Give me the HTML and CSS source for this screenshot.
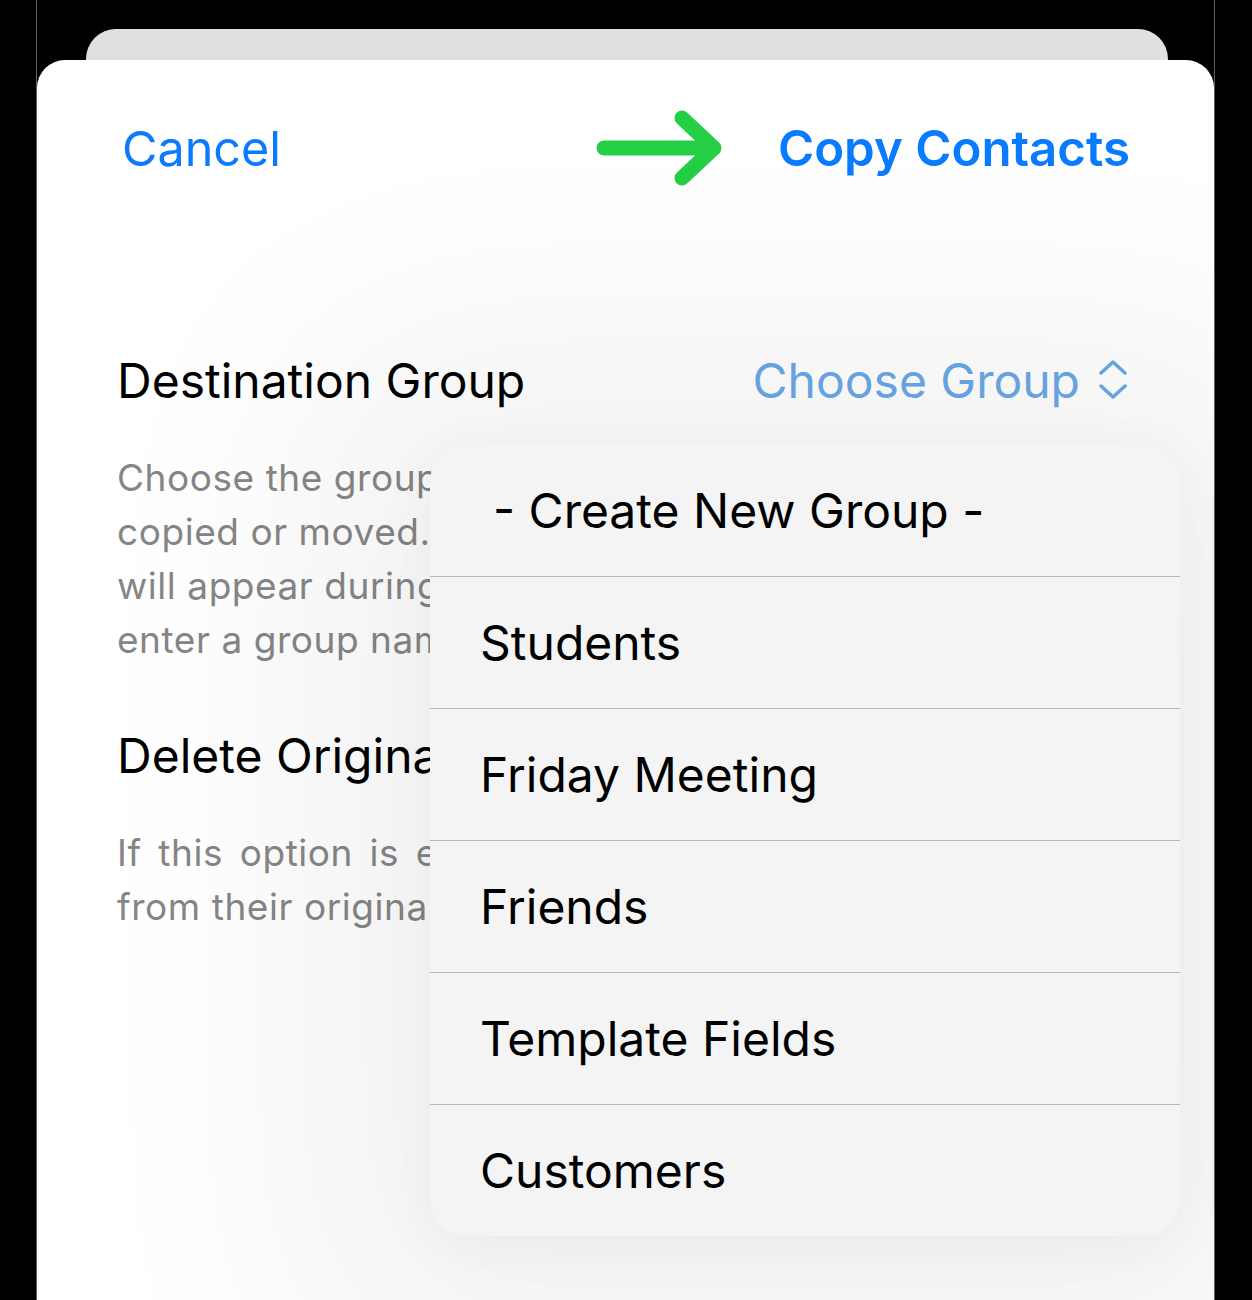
FILE: index.html
```html
<!DOCTYPE html>
<html lang="en">
  <head>
    <meta charset="UTF-8" />
    <meta name="viewport" content="width=device-width, initial-scale=1.0" />
    <title>Copy Contacts</title>
    <link rel="stylesheet" href="styles.css">
  </head>
  <body>
    <div class="device">
      <div class="back-card"></div>

      <div class="sheet">
        <header class="nav">
          <button class="nav-btn">Cancel</button>
          <div class="nav-right">
            <svg class="arrow" width="126" height="80" viewBox="0 0 126 80">
              <path d="M8 40 H118 M86 10 L118 40 L86 70" fill="none" stroke="#25cf45" stroke-width="15" stroke-linecap="round" stroke-linejoin="round" />
            </svg>
            <button class="nav-btn nav-btn-bold">Copy Contacts</button>
          </div>
        </header>

        <section class="form">
          <div class="row">
            <span class="row-label">Destination Group</span>
            <span class="picker">
              Choose Group
              <svg class="updown" width="30" height="40" viewBox="0 0 30 40">
                <path d="M3 13 L15 2 L27 13 M3 26 L15 37 L27 26" fill="none" stroke="currentColor" stroke-width="3.5" stroke-linecap="round" stroke-linejoin="round" />
              </svg>
            </span>
          </div>
          <p class="note">
            Choose the group where the selected contacts will be<br>
            copied or moved. A “Create New Group” option<br>
            will appear during the copy if you would rather<br>
            enter a group name of your own.
          </p>

          <div class="row">
            <span class="row-label">Delete Original Group Membership</span>
          </div>
          <p class="note note-justify">
            If this option is enabled, the contacts will be removed
            from their original group after they have been copied.
          </p>
        </section>

        <!-- group picker menu, open -->
        <ul class="menu">
          <li class="menu-item menu-item-new">- Create New Group -</li>
          <li class="menu-item">Students</li>
          <li class="menu-item">Friday Meeting</li>
          <li class="menu-item">Friends</li>
          <li class="menu-item">Template Fields</li>
          <li class="menu-item">Customers</li>
        </ul>
      </div>
    </div>
  </body>
</html>
```

FILE: styles.css
```css
/* Global Styles */
body {
  margin: 0;
  background: #000;
  font-family: "Inter", "Roboto", sans-serif;
  overflow: hidden;
}
.device {
  margin-left: 36px;
  width: 1177px;
  height: 1300px;
  border-left: 1px solid #5e5e5e;
  border-right: 1px solid #5e5e5e;
  display: flex;
  flex-direction: column;
}
/* Card peeking out behind the sheet */
.back-card {
  height: 31px;
  margin: 29px 46px 0 49px;
  background: #e0e0e0;
  border-radius: 30px 30px 0 0;
}
.sheet {
  position: relative;
  flex: 1;
  background: #fff;
  border-radius: 28px 28px 0 0;
  overflow: hidden;
}
/* Nav bar */
.nav {
  height: 176px;
  display: flex;
  align-items: center;
  justify-content: space-between;
  padding: 0 84px 0 85px;
}
.nav-right {
  display: flex;
  align-items: center;
  gap: 56px;
}
.nav-btn {
  border: none;
  background: none;
  padding: 0;
  font-family: inherit;
  font-size: 48.5px;
  color: #0a7aff;
  cursor: pointer;
}
.nav-btn-bold {
  font-size: 49.2px;
  font-weight: 600;
}
.arrow {
  display: block;
}
/* Form rows */
.form {
  padding: 96px 86px 0 80px;
}
.row {
  height: 96px;
  display: flex;
  align-items: center;
  justify-content: space-between;
}
.row-label {
  font-size: 48px;
  color: #000;
  white-space: nowrap;
}
.picker {
  display: flex;
  align-items: center;
  gap: 18px;
  font-size: 48px;
  color: #6aa8e8;
}
.updown {
  display: block;
}
.note {
  margin: 23px 0 40px;
  font-size: 37px;
  line-height: 54px;
  letter-spacing: 0.55px;
  color: #868686;
}
.note-justify {
  text-align: justify;
}
/* Dropdown menu */
.menu {
  position: absolute;
  left: 393px;
  top: 385px;
  width: 750px;
  margin: 0;
  padding: 0;
  list-style: none;
  background: #f4f4f4;
  border-radius: 36px;
  box-shadow: 0 20px 240px 130px rgba(0, 0, 0, 0.055), 0 10px 60px rgba(0, 0, 0, 0.04);
  overflow: hidden;
}
.menu-item {
  height: 131px;
  display: flex;
  align-items: center;
  padding-left: 50px;
  font-size: 48px;
  color: #000;
  border-bottom: 1px solid #b8b8b8;
}
.menu-item:last-child {
  border-bottom: none;
}
.menu-item-new {
  padding-left: 63px;
}
```
